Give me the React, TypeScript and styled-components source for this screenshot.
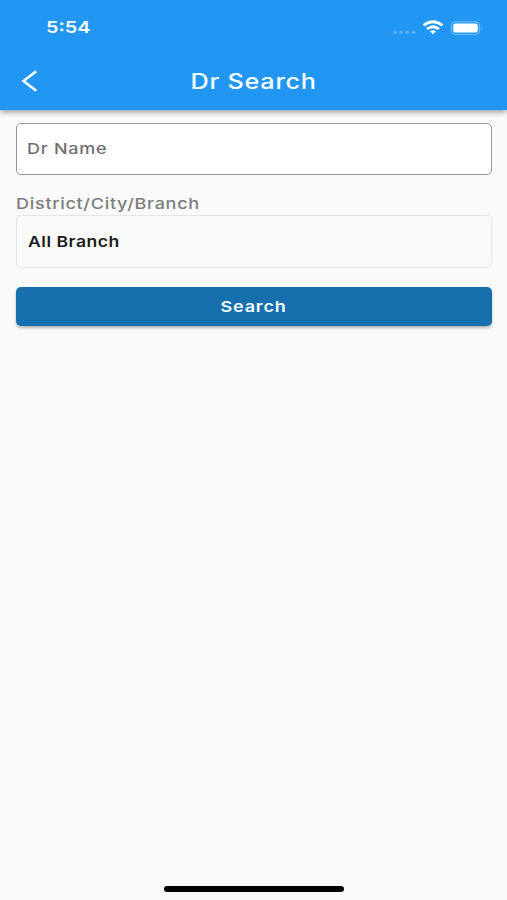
import React from 'react';
import styled, { createGlobalStyle } from 'styled-components';

const GlobalStyle = createGlobalStyle`
  * { box-sizing: border-box; }
  body { margin: 0; background: #fafafa; font-family: Inter, "Open Sans", sans-serif; }
`;

const Screen = styled.div`
  width: 507px;
  height: 900px;
  display: flex;
  flex-direction: column;
  background: #fafafa;
  overflow: hidden;
`;

const Header = styled.header`
  height: 110px;
  flex: none;
  background: #2196f3;
  color: #fff;
  box-shadow: 0 2px 6px rgba(0, 0, 0, 0.4);
`;

const StatusBar = styled.div`
  height: 55px;
  padding: 0 23px 0 46px;
  display: flex;
  align-items: center;
  justify-content: space-between;
`;

const StatusIcons = styled.div`
  display: flex;
  align-items: center;
`;

const NavBar = styled.div`
  height: 55px;
  display: grid;
  grid-template-columns: 60px 1fr 60px;
  align-items: center;
`;

const BackButton = styled.button`
  display: flex;
  padding: 0 0 3px 21px;
  border: 0;
  background: none;
  color: inherit;
`;

const Label = styled.span<{
  $size: number;
  $weight?: number;
  $stretch: number;
  $tracking?: number;
  $centered?: boolean;
}>`
  display: block;
  white-space: nowrap;
  line-height: 1.2;
  font-size: ${(p) => p.$size}px;
  font-weight: ${(p) => p.$weight ?? 500};
  letter-spacing: ${(p) => p.$tracking ?? 0}px;
  transform: scaleX(${(p) => p.$stretch});
  transform-origin: ${(p) => (p.$centered ? 'center' : 'left')};
`;

const Title = styled.h1`
  margin: 0;
  padding-bottom: 1px;
  display: flex;
  justify-content: center;
`;

const Form = styled.main`
  flex: 1;
  padding: 13px 15.5px 0 16px;
  display: flex;
  flex-direction: column;
`;

const NameField = styled.div`
  height: 52px;
  padding: 0 0 1px 9.5px;
  display: flex;
  align-items: center;
  border: 1.5px solid #969696;
  border-radius: 5px;
  background: #fff;
  color: #707070;
`;

const FieldCaption = styled.div`
  height: 40px;
  padding: 20px 0 0 0;
  color: #7c7c7c;
`;

const BranchField = styled.div`
  height: 53px;
  padding: 1px 0 0 11px;
  display: flex;
  align-items: center;
  border: 1.5px solid #e5e5e5;
  border-radius: 5px;
  color: #1c1c1c;
`;

const SearchButton = styled.button`
  height: 39px;
  margin-top: 19px;
  padding: 0;
  display: flex;
  align-items: center;
  justify-content: center;
  border: 0;
  border-radius: 5px;
  background: #176fae;
  color: #f4faff;
  font-family: inherit;
  box-shadow: 0 2px 3px rgba(0, 0, 0, 0.28);
`;

const HomeArea = styled.footer`
  height: 15px;
  padding-top: 1px;
  display: flex;
  justify-content: center;
`;

const HomeIndicator = styled.div`
  width: 180px;
  height: 5.5px;
  border-radius: 3px;
  background: #000;
`;

export default function App() {
  return (
    <>
      <GlobalStyle />
      <Screen>
        <Header>
          <StatusBar>
            <Label $size={16.5} $weight={600} $stretch={1.2}>5:54</Label>
            <StatusIcons>
              <svg width="92" height="20" viewBox="0 0 92 20" fill="none">
                <g fill="#fff" opacity="0.27">
                  <ellipse cx="3" cy="14.3" rx="2" ry="1.6" />
                  <ellipse cx="9" cy="14.3" rx="2" ry="1.6" />
                  <ellipse cx="15.3" cy="14.3" rx="2" ry="1.6" />
                  <ellipse cx="21.5" cy="14.3" rx="2" ry="1.6" />
                </g>
                <g stroke="#fff" strokeWidth="2.8">
                  <path d="M31.6 7.4Q41 0 50.4 7.4" />
                  <path d="M35 11Q41 6.5 47 11" />
                </g>
                <path d="M38 13.4Q41 11 44 13.4L41 16.2Z" fill="#fff" />
                <rect x="59.4" y="3.8" width="28.2" height="12.6" rx="3.8" stroke="#fff" strokeOpacity="0.38" />
                <rect x="61.2" y="5.6" width="24.6" height="9" rx="2.2" fill="#fff" />
                <path d="M89.2 8.2Q91.5 10.1 89.2 12.1Z" fill="#fff" fillOpacity="0.45" />
              </svg>
            </StatusIcons>
          </StatusBar>
          <NavBar>
            <BackButton aria-label="Back">
              <svg width="18" height="22" viewBox="0 0 18 22" fill="none" stroke="#fff" strokeWidth="2.6">
                <path d="M15.2 1.2L2.5 11L15.2 20.8" />
              </svg>
            </BackButton>
            <Title><Label $size={21} $stretch={1.2} $tracking={0.65} $centered>Dr Search</Label></Title>
          </NavBar>
        </Header>
        <Form>
          <NameField><Label $size={15} $stretch={1.2} $tracking={0.6}>Dr Name</Label></NameField>
          <FieldCaption><Label $size={15} $stretch={1.2} $tracking={0.6}>District/City/Branch</Label></FieldCaption>
          <BranchField><Label $size={15} $weight={600} $stretch={1.17} $tracking={0.45}>All Branch</Label></BranchField>
          <SearchButton><Label $size={15} $weight={600} $stretch={1.2} $tracking={0.7} $centered>Search</Label></SearchButton>
        </Form>
        <HomeArea><HomeIndicator /></HomeArea>
      </Screen>
    </>
  );
}
